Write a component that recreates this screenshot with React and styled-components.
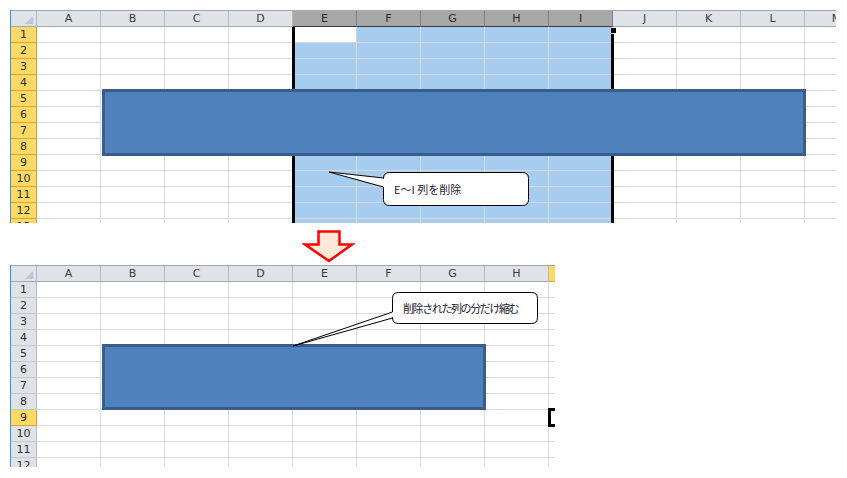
import React from "react";
import styled, { createGlobalStyle } from "styled-components";

const GlobalStyle = createGlobalStyle`
  html, body { margin: 0; padding: 0; background: #ffffff; }
  * { box-sizing: border-box; }
`;

const Page = styled.div`
  display: flex;
  flex-direction: column;
  padding: 10px 0 0 10px;
  width: 847px;
  height: 478px;
  overflow: hidden;
`;

const Sheet = styled.div`
  position: relative;
  width: ${(p) => p.$w}px;
  height: ${(p) => p.$h}px;
  overflow: hidden;
  border-left: 1px solid #3c8fe2;
  font-family: "DejaVu Sans", "Liberation Sans", sans-serif;
  font-size: 11px;
  color: #333333;
  flex-shrink: 0;
`;

const HeaderRow = styled.div`
  display: flex;
  border-top: 1px solid #9ea6af;
`;

const Corner = styled.div`
  position: relative;
  flex: 0 0 26px;
  height: 16px;
  background: #dfe3e8;
  border-right: 1px solid #b2b9c1;
  border-bottom: 1px solid #9ea8b3;
  &::after {
    content: "";
    position: absolute;
    right: 3px;
    bottom: 2px;
    width: 0;
    height: 0;
    border-left: 8px solid transparent;
    border-bottom: 8px solid #c0c6cd;
  }
`;

const ColHeader = styled.div`
  flex: 0 0 64px;
  height: 16px;
  line-height: 15px;
  text-align: center;
  background: ${(p) => (p.$sel ? "#a8a8a8" : p.$active ? "#ffd966" : "#dfe3e8")};
  border-right: 1px solid ${(p) => (p.$sel ? "#808080" : p.$active ? "#e0a435" : "#b2b9c1")};
  border-bottom: 1px solid ${(p) => (p.$sel ? "#3a3a3a" : p.$active ? "#e0a435" : "#9ea8b3")};
  color: ${(p) => (p.$sel ? "#2a2a2a" : "#3a3a3a")};
`;

const Row = styled.div`
  display: flex;
`;

const RowHeader = styled.div`
  flex: 0 0 26px;
  height: 16px;
  line-height: 15px;
  text-align: center;
  background: ${(p) => (p.$active ? "#ffd966" : "#dfe3e8")};
  border-right: 1px solid ${(p) => (p.$active ? "#d99a33" : "#b2b9c1")};
  border-bottom: 1px solid ${(p) => (p.$active ? "#e0a435" : "#c2c8cf")};
  color: #2f2f2f;
`;

const Cell = styled.div`
  flex: 0 0 64px;
  height: 16px;
  background: ${(p) => (p.$sel ? "#a6cdf0" : "#ffffff")};
  border-right: 1px solid #d9d9d9;
  border-bottom: 1px solid #d9d9d9;
`;

const SelEdge = styled.div`
  position: absolute;
  left: ${(p) => p.$x}px;
  top: ${(p) => p.$y}px;
  width: 3px;
  bottom: 0;
  background: #000000;
`;

const FillHandle = styled.div`
  position: absolute;
  left: ${(p) => p.$x}px;
  top: ${(p) => p.$y}px;
  width: 5px;
  height: 5px;
  background: #000000;
`;

const ActiveCell = styled.div`
  position: absolute;
  left: ${(p) => p.$x}px;
  top: ${(p) => p.$y}px;
  width: 30px;
  height: 19px;
  border: 3px solid #000000;
`;

const Shape = styled.div`
  position: absolute;
  left: ${(p) => p.$x}px;
  top: ${(p) => p.$y}px;
  width: ${(p) => p.$w}px;
  height: ${(p) => p.$h}px;
  background: #4f81bd;
  border: 3px solid #3a5e8b;
`;

const CalloutBox = styled.div`
  position: absolute;
  left: ${(p) => p.$x}px;
  top: ${(p) => p.$y}px;
  width: ${(p) => p.$w}px;
  height: ${(p) => p.$h}px;
  display: flex;
  align-items: center;
  padding-left: 11px;
`;

const CalloutShape = styled.svg`
  position: absolute;
  left: 0;
  top: 0;
  overflow: visible;
`;

const CalloutText = styled.span`
  position: relative;
  font-family: "Noto Sans CJK JP", "Liberation Sans", sans-serif;
  font-size: 11px;
  letter-spacing: ${(p) => p.$spacing}px;
  color: #1c1830;
  white-space: nowrap;
  line-height: 1;
`;

const ArrowRow = styled.div`
  display: flex;
  height: 42px;
  padding: 6px 0 0 292px;
  flex-shrink: 0;
`;

function calloutPath(w, h, y1, y2, tx, ty) {
  const r = 6;
  const a = 0.5;
  return [
    `M ${r + a} ${a}`,
    `H ${w - r - a}`,
    `Q ${w - a} ${a} ${w - a} ${r + a}`,
    `V ${h - r - a}`,
    `Q ${w - a} ${h - a} ${w - r - a} ${h - a}`,
    `H ${r + a}`,
    `Q ${a} ${h - a} ${a} ${h - r - a}`,
    `V ${y2}`,
    `L ${tx} ${ty}`,
    `L ${a} ${y1}`,
    `V ${r + a}`,
    `Q ${a} ${a} ${r + a} ${a}`,
    "Z",
  ].join(" ");
}

function Callout({ x, y, w, h, y1, y2, tx, ty, spacing = 0, children }) {
  return (
    <CalloutBox $x={x} $y={y} $w={w} $h={h}>
      <CalloutShape width={w} height={h}>
        <path
          d={calloutPath(w, h, y1, y2, tx, ty)}
          fill="#ffffff"
          stroke="#000000"
          strokeWidth="1"
          strokeLinejoin="miter"
        />
      </CalloutShape>
      <CalloutText $spacing={spacing}>{children}</CalloutText>
    </CalloutBox>
  );
}

function Grid({ cols, rows, selCols = [], skipCell, activeCol, activeRow, allRowsActive }) {
  return (
    <>
      <HeaderRow>
        <Corner />
        {cols.map((c) => (
          <ColHeader key={c} $sel={selCols.includes(c)} $active={c === activeCol}>
            {c}
          </ColHeader>
        ))}
      </HeaderRow>
      {Array.from({ length: rows }, (_, i) => i + 1).map((r) => (
        <Row key={r}>
          <RowHeader $active={allRowsActive || r === activeRow}>{r}</RowHeader>
          {cols.map((c) => (
            <Cell
              key={c}
              $sel={selCols.includes(c) && !(skipCell && skipCell[0] === c && skipCell[1] === r)}
            />
          ))}
        </Row>
      ))}
    </>
  );
}

const topCols = ["A", "B", "C", "D", "E", "F", "G", "H", "I", "J", "K", "L", "M"];
const bottomCols = ["A", "B", "C", "D", "E", "F", "G", "H", "I"];

export default function App() {
  return (
    <>
      <GlobalStyle />
      <Page>
        <Sheet $w={826} $h={213}>
          <Grid
            cols={topCols}
            rows={13}
            selCols={["E", "F", "G", "H", "I"]}
            skipCell={["E", 1]}
            allRowsActive
          />
          <SelEdge $x={281} $y={17} />
          <SelEdge $x={600} $y={24} />
          <FillHandle $x={600} $y={18} />
          <Shape $x={91} $y={79} $w={704} $h={67} />
          <Callout x={372} y={162} w={146} h={34} y1={6} y2={15} tx={-54} ty={0}>
            E～I 列を削除
          </Callout>
        </Sheet>
        <ArrowRow>
          <svg width="54" height="36" viewBox="0 0 54 36">
            <polygon
              points="16.5,2.5 37.5,2.5 37.5,15.5 50,15.5 27,32 3,15.5 16.5,15.5"
              fill="#fde9d9"
              stroke="#ff0000"
              strokeWidth="2.5"
              strokeLinejoin="miter"
            />
          </svg>
        </ArrowRow>
        <Sheet $w={545} $h={202}>
          <Grid cols={bottomCols} rows={12} activeCol="I" activeRow={9} />
          <ActiveCell $x={537} $y={143} />
          <Shape $x={91} $y={79} $w={384} $h={66} />
          <Callout x={381} y={27} w={146} h={32} y1={20} y2={26} tx={-99} ty={54} spacing={-1.4}>
            削除された列の分だけ縮む
          </Callout>
        </Sheet>
      </Page>
    </>
  );
}
